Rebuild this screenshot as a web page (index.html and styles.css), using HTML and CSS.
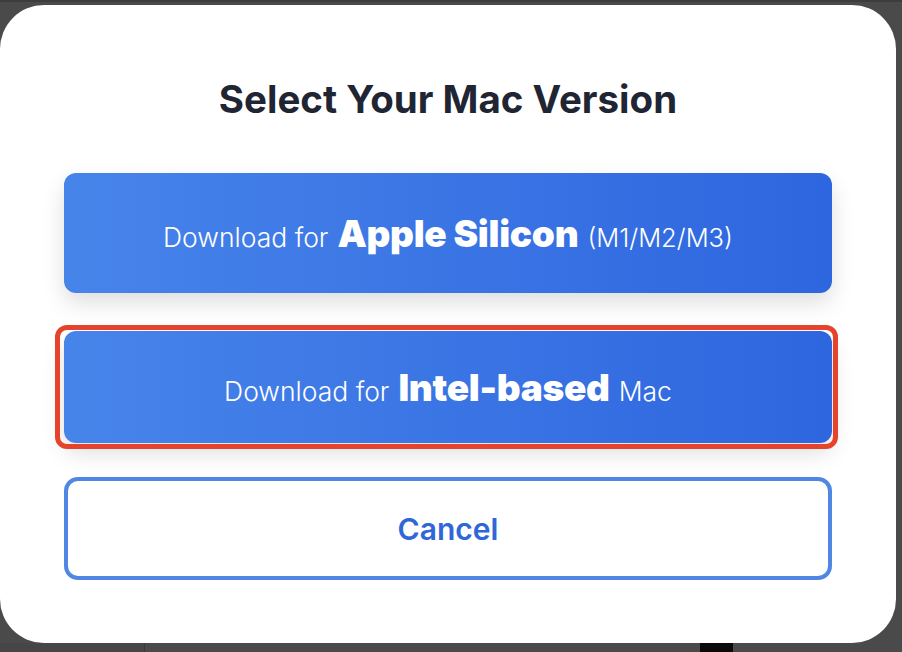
FILE: index.html
```html
<!DOCTYPE html>
<html lang="en">
<head>
    <meta charset="UTF-8">
    <meta name="viewport" content="width=device-width, initial-scale=1.0">
    <title>Select Your Mac Version</title>
    <link rel="stylesheet" href="styles.css">
</head>
<body>
    <div class="modal">
        <h2 class="modal-title">Select Your Mac Version</h2>

        <button class="dl-button">
            <span class="dl-light">Download for</span>
            <span class="dl-strong">Apple Silicon</span>
            <span class="dl-note">(M1/M2/M3)</span>
        </button>

        <button class="dl-button dl-selected">
            <span class="dl-light">Download for</span>
            <span class="dl-strong">Intel-based</span>
            <span class="dl-light">Mac</span>
        </button>

        <button class="cancel-button">Cancel</button>
    </div>

    <div class="page-bottom">
        <div class="bottom-seg seg-a"></div>
        <div class="bottom-seg seg-b"></div>
        <div class="bottom-seg seg-c"></div>
        <div class="bottom-seg seg-d"></div>
    </div>
</body>
</html>
```

FILE: styles.css
```css
* {
    box-sizing: border-box;
}
html, body {
    height: 100%;
}
body {
    margin: 0;
    font-family: Inter, "Noto Sans", Arial, sans-serif;
    background: linear-gradient(to bottom, #3c3c3c 0, #3c3c3c 2px, #4a4a4a 2px);
    overflow: hidden;
    display: flex;
    flex-direction: column;
}
.modal {
    margin-top: 5px;
    width: 896px;
    height: 638px;
    background: #fff;
    border-radius: 44px;
    padding: 72px 64px 0;
    display: flex;
    flex-direction: column;
    flex-shrink: 0;
}
.modal-title {
    margin: 0;
    font-size: 38.5px;
    line-height: 44px;
    font-weight: 700;
    color: #1f2533;
    text-align: center;
}
.dl-button {
    position: relative;
    display: flex;
    align-items: baseline;
    justify-content: center;
    align-content: center;
    flex-wrap: wrap;
    gap: 9px;
    width: 100%;
    height: 120px;
    margin-top: 52px;
    padding: 0 0 0;
    border: none;
    border-radius: 12px;
    background: linear-gradient(to right, #4784ea, #2e66df);
    box-shadow: 0 10px 22px rgba(0, 0, 0, 0.13);
    color: #fff;
    font-family: Inter, "Noto Sans", Arial, sans-serif;
}
.dl-light {
    font-size: 26.5px;
    font-weight: 300;
}
.dl-strong {
    font-size: 37px;
    font-weight: 900;
    letter-spacing: -0.3px;
}
.dl-note {
    font-size: 25.5px;
    font-weight: 300;
}
.dl-selected {
    height: 112px;
    margin-top: 38px;
}
.dl-selected::after {
    content: "";
    position: absolute;
    top: -6px;
    bottom: -6px;
    left: -9px;
    right: -6px;
    border: 5px solid #e5432b;
    border-radius: 12px;
}
.cancel-button {
    width: 100%;
    height: 103px;
    margin-top: 34px;
    background: #fff;
    border: 4px solid #5087e2;
    border-radius: 14px;
    color: #2f66d8;
    font-family: Inter, "Noto Sans", Arial, sans-serif;
    font-size: 30px;
    font-weight: 600;
}
.page-bottom {
    flex: 1;
    display: flex;
}
.bottom-seg {
    height: 100%;
}
.seg-a {
    width: 145px;
    background: #464646;
    border-right: 1px solid #3a3a3a;
}
.seg-b {
    width: 555px;
    background: #4a4a4a;
}
.seg-c {
    width: 33px;
    background: #0d0a09;
}
.seg-d {
    flex: 1;
    background: #4a4a4a;
}
```
